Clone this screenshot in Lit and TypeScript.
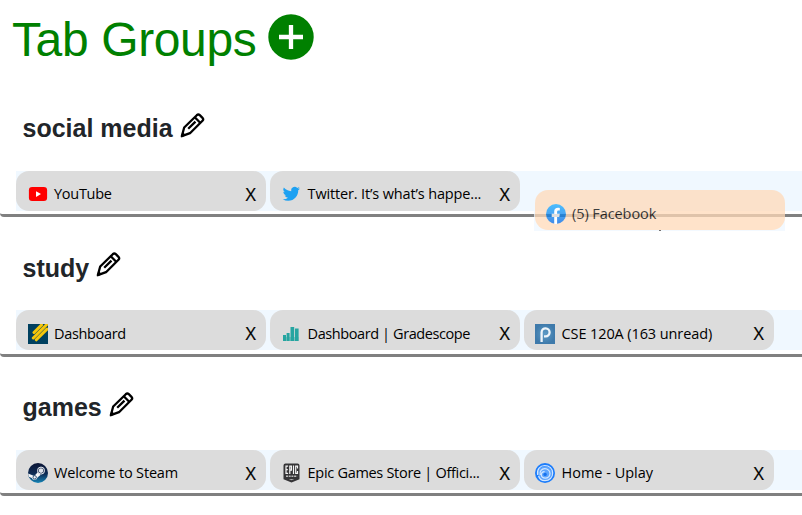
import { LitElement, html, css, svg } from "lit";
import { customElement, property } from "lit/decorators.js";

const icons: Record<string, unknown> = {
  youtube: svg`<rect x=".9" y="3" width="18.200" height="14" rx="3.200" fill="#f00"/><path d="M8 7.200l5 2.900-5 2.900z" fill="#fff"/>`,
  twitter: svg`<path transform="translate(.7 1.200) scale(.72)" fill="#1da1f2" d="M23.95 4.57a10 10 0 0 1-2.82.77 4.96 4.96 0 0 0 2.16-2.72c-.95.55-2 .96-3.13 1.18a4.92 4.92 0 0 0-8.38 4.48C7.69 8.09 4.07 6.13 1.64 3.16a4.93 4.93 0 0 0 1.52 6.57 4.9 4.9 0 0 1-2.23-.61v.06a4.92 4.92 0 0 0 3.95 4.83 5 5 0 0 1-2.21.08 4.94 4.94 0 0 0 4.6 3.42A9.87 9.87 0 0 1 0 19.54a14 14 0 0 0 7.55 2.21c9.05 0 14-7.5 14-13.98 0-.21 0-.42-.02-.63a9.94 9.94 0 0 0 2.42-2.57z"/>`,
  facebook: svg`<defs><linearGradient id="fb" x2="0" y2="1"><stop stop-color="#18acfe"/><stop offset="1" stop-color="#0163e0"/></linearGradient></defs><circle cx="10" cy="10" r="10" fill="url(#fb)"/><path fill="#fff" d="M8.200 19.900v-7H5.700V9.800h2.500V7.500C8.200 5 9.700 3.800 11.900 3.800c.9 0 1.900.2 1.900.2v2.500h-1.200c-1.200 0-1.500.7-1.500 1.500v1.800h2.700l-.5 3.100h-2.200v7z"/>`,
  canvas: svg`<rect width="20" height="20" fill="#00405f"/><g stroke="#f5c60a" stroke-width="3" stroke-linecap="round" fill="none"><path d="M6 8.500L13.500 1M5.300 14L18.500 .8M8.300 15.800L19 5.100"/></g>`,
  gradescope: svg`<g fill="#26a5a1"><rect x="1" y="11" width="3" height="6"/><rect x="4.600" y="9" width="3" height="8"/><rect x="8.500" y="3" width="3.700" height="14"/><rect x="13" y="4.500" width="3.600" height="12.500"/></g><path d="M1 13H16.600V17H1z" fill="#26a5a1" opacity=".4"/>`,
  piazza: svg`<defs><radialGradient id="pz"><stop stop-color="#5d9bc6"/><stop offset="1" stop-color="#3e7aab"/></radialGradient></defs><rect width="20" height="20" fill="url(#pz)"/><path d="M6.600 18V8.200A4 4 0 1 1 10.700 12.300H9" fill="none" stroke="#eef5fa" stroke-width="2.300"/>`,
  steam: svg`<defs><linearGradient id="st" x2="0" y2="1"><stop stop-color="#0b1535"/><stop offset=".55" stop-color="#0d2c55"/><stop offset="1" stop-color="#1686b8"/></linearGradient></defs><circle cx="10" cy="10" r="10" fill="url(#st)"/><path d="M.1 10.500L6.200 13L10 9L12.500 12L9.500 14.500A3 3 0 0 1 3.800 15L.9 13.800z" fill="#f2f4f7"/><circle cx="13" cy="7.600" r="3.500" fill="#0d2348" stroke="#f2f4f7" stroke-width="1"/><circle cx="13" cy="7.600" r="2.300" fill="#dfe4eb"/><circle cx="6.700" cy="14.300" r="1.700" fill="#eef1f5" stroke="#12365f" stroke-width=".8"/>`,
  epic: svg`<path d="M1.500 2.500a2 2 0 0 1 2-2H15.500a2 2 0 0 1 2 2V16.300L9.500 19.500 1.500 16.300z" fill="#353436"/><g fill="none" stroke="#f5f5f5" stroke-width="1.200"><path d="M6.100 3.100H4V10.400H6.100M4 6.700H5.800M7.800 11V3.100H9.400V7.100H7.800M11.500 2.500V11M15.500 5.500V3.100H13.700V10.400H15.500V8"/></g><path d="M4 13.200H15.100" stroke="#bbb" stroke-width="1.500" stroke-dasharray="2 .7"/><path d="M6.800 16h5.500l-2.800 1.200z" fill="#aaa"/>`,
  uplay: svg`<circle cx="10" cy="10" r="10" fill="#1b7cfb"/><circle cx="10" cy="10.200" r="7" fill="#5da5fd"/><g fill="none" stroke="#d3e7ff"><path d="M2.700 12C1.600 6.500 5.200 2.500 9.700 2.500c4.700 0 8 3.300 8 7.500 0 4.600-3.300 7.600-7.700 7.600-3.200 0-5.800-2-6.400-4.600" stroke-width="1.200"/><path d="M5.200 12c-.8-3.700 1.500-6.300 4.600-6.300 3 0 5.200 2.200 5.200 4.800 0 2.700-2 4.700-4.800 4.700-2.200 0-3.900-1.400-3.900-3.200 0-2 1.500-3.300 3.300-3.300" stroke-width="1.200"/></g><circle cx="10.100" cy="11.400" r="1.700" fill="#1672ee"/>`,
};

@customElement("tab-card")
export class TabCard extends LitElement {
  @property() icon = "";
  @property() label = "";
  @property({ type: Number }) spacing = 0;
  @property({ type: Number }) column = 0;
  @property({ type: Boolean }) low = false;
  @property({ type: Boolean }) dragging = false;

  static styles = css`
    :host { display: block; flex: none; width: 250px; height: 40px; }
    .card {
      box-sizing: border-box; display: flex; align-items: flex-start;
      height: 40px; padding: 13px 10px 0 12px; border-radius: 13px; background: gainsboro;
      font-family: "Open Sans", "Noto Sans", sans-serif; color: #000;
    }
    .dragging { background: peachpuff; padding-top: 14px; padding-left: 11px; }
    .icon { display: block; flex: none; width: 20px; height: 20px; margin-right: 6px; }
    .col1 .icon { margin-right: 5.6px; }
    .col2 { padding-left: 11px; }
    .col2 .icon { margin-right: 6.500px; }
    .low .icon { margin-top: 1px; }
    .label { flex: 1; font-size: 14.5px; line-height: 20px; white-space: nowrap; }
    .low .label { margin-top: 1px; }
    .close { font-size: 18px; line-height: 21px; -webkit-text-stroke: .2px #000; }
  `;

  render() {
    return html`<div class="card col${this.column} ${this.dragging ? "dragging" : ""} ${this.low ? "low" : ""}">
      <svg class="icon" viewBox="0 0 20 20">${icons[this.icon]}</svg>
      <span class="label" style="letter-spacing:${this.spacing}px">${this.label}</span>
      ${this.dragging ? "" : html`<span class="close">X</span>`}
    </div>`;
  }
}

interface Tab { icon: string; label: string; spacing: number }
interface Group { name: string; size: string; tabs: Tab[] }

const groups: Group[] = [
  { name: "social media", size: "first", tabs: [
    { icon: "youtube", label: "YouTube", spacing: -0.28 },
    { icon: "twitter", label: "Twitter. It’s what’s happe...", spacing: -0.15 },
  ] },
  { name: "study", size: "second", tabs: [
    { icon: "canvas", label: "Dashboard", spacing: -0.33 },
    { icon: "gradescope", label: "Dashboard | Gradescope", spacing: -0.41 },
    { icon: "piazza", label: "CSE 120A (163 unread)", spacing: -0.1 },
  ] },
  { name: "games", size: "third", tabs: [
    { icon: "steam", label: "Welcome to Steam", spacing: -0.16 },
    { icon: "epic", label: "Epic Games Store | Offici...", spacing: -0.3 },
    { icon: "uplay", label: "Home - Uplay", spacing: 0 },
  ] },
];

@customElement("app-root")
export class AppRoot extends LitElement {
  static styles = css`
    :host {
      display: block; position: relative; height: 515px; overflow: hidden;
      background: #fff; font-family: "Liberation Sans", Arial, sans-serif;
    }
    .top { display: flex; align-items: flex-start; height: 77px; padding-left: 12px; box-sizing: border-box; color: green; }
    .title { margin: 0; width: 256px; font-size: 48px; font-weight: 400; line-height: 56px; padding-top: 12px; letter-spacing: -.38px; white-space: nowrap; }
    .add { display: block; width: 46px; height: 46px; margin-top: 14px; }
    .group {
      box-sizing: border-box; display: flex; flex-direction: column; height: 140px;
      border-bottom: 3px solid gray; border-bottom-left-radius: 4px;
    }
    .third { height: 139px; }
    .heading { display: flex; align-items: flex-start; gap: 7.300px; height: 94px; padding-left: 22.500px; }
    .second .heading { height: 93px; }
    .third .heading { height: 93px; }
    .name { margin: 0; font-size: 25px; line-height: 28px; font-weight: 700; color: #212529; padding-top: 37px; }
    .pencil { display: block; width: 25px; height: 25px; margin-top: 36px; }
    .second .pencil { margin-top: 35px; }
    .third .pencil { margin-top: 35px; }
    .third .name { padding-top: 36px; }
    .strip { display: flex; gap: 4px; height: 40px; margin-left: 16px; background: aliceblue; }
    .ghost {
      position: absolute; left: 534px; top: 190px; width: 251px; height: 41px;
      box-sizing: border-box; padding-left: 1px; background: aliceblue; opacity: .75;
    }
    .speck { position: absolute; left: 125px; top: 40px; width: 2px; height: 1px; background: #444; }
  `;

  render() {
    return html`
      <div class="top">
        <h1 class="title">Tab Groups</h1>
        <svg class="add" viewBox="0 0 46 46"><circle cx="23" cy="23" r="22.700" fill="green"/><path d="M23 11v24M11 23h24" stroke="#fff" stroke-width="4.300"/></svg>
      </div>
      ${groups.map((g) => html`<section class="group ${g.size}">
        <div class="heading">
          <h2 class="name">${g.name}</h2>
          <svg class="pencil" viewBox="0 0 25 25" fill="none" stroke="#000" stroke-width="2.300" stroke-linejoin="round">
            <path d="M4.200 14.500L16.800 2.200Q18.300 .8 19.800 2.200L22.500 4.800Q24 6.300 22.500 7.800L10 20.200L1.800 23.200z"/>
            <path d="M15 4.500L20.200 9.800M8.200 15.800L15.500 8.600"/>
            <path d="M.8 24.200L2.400 18.800L6.200 22.600z" fill="#000" stroke="none"/>
          </svg>
        </div>
        <div class="strip">
          ${g.tabs.map((t, i) => html`<tab-card .icon=${t.icon} .label=${t.label} .spacing=${t.spacing} .column=${i} .low=${g.size === "second"}></tab-card>`)}
        </div>
      </section>`)}
      <div class="ghost">
        <tab-card icon="facebook" label="(5) Facebook" spacing="-0.08" dragging></tab-card>
        <span class="speck"></span>
      </div>
    `;
  }
}
